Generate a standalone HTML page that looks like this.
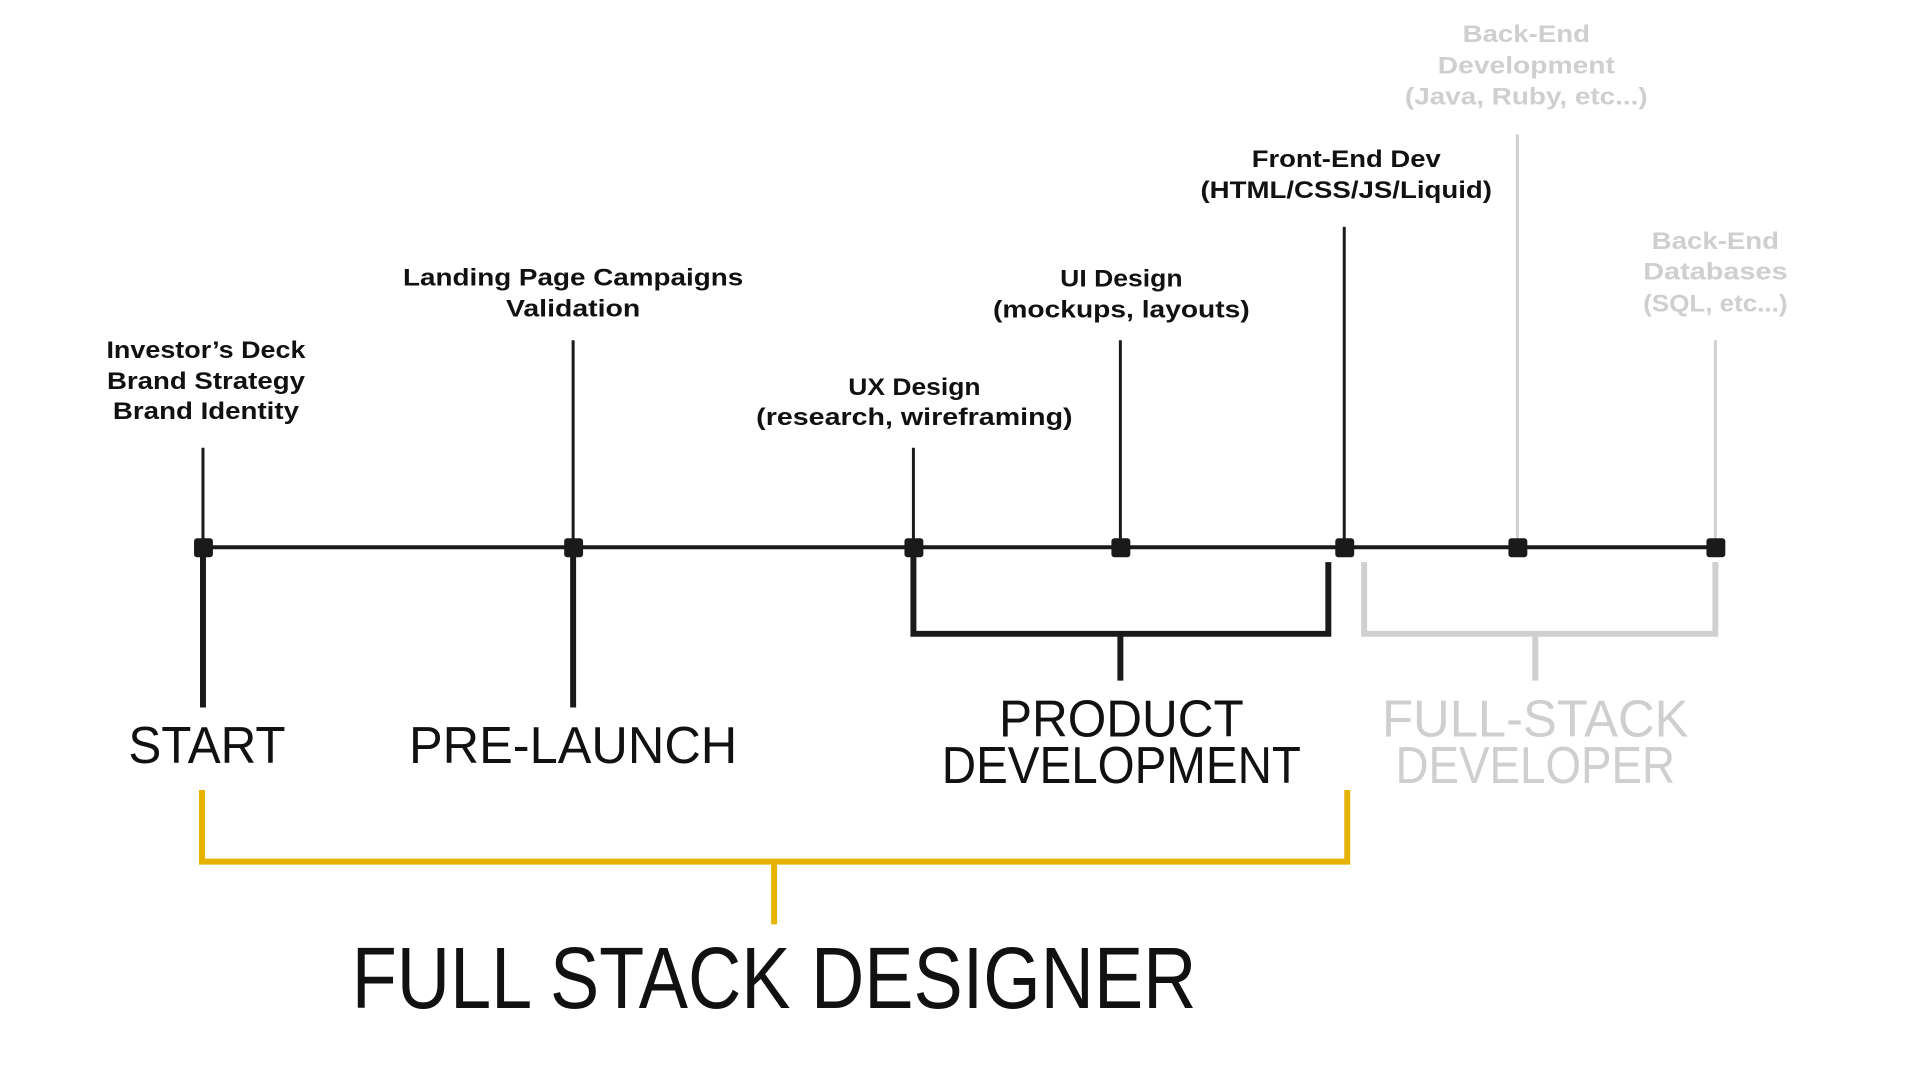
<!DOCTYPE html>
<html><head><meta charset="utf-8"><style>
html,body{margin:0;padding:0;background:#fff;width:1920px;height:1080px;overflow:hidden}
svg{display:block}
.s{font-family:"Liberation Sans",sans-serif;font-weight:bold;font-size:24px;text-anchor:middle}
.b{font-family:"Liberation Sans",sans-serif;font-size:52px;text-anchor:middle}
</style></head><body>
<svg width="1920" height="1080" viewBox="0 0 1920 1080">
<g transform="scale(0.995)">
<g stroke="#1a1a1a" stroke-width="3" fill="none">
<line x1="204" y1="450" x2="204" y2="550"/>
<line x1="576" y1="342" x2="576" y2="550"/>
<line x1="918" y1="450" x2="918" y2="550"/>
<line x1="1126" y1="342" x2="1126" y2="550"/>
<line x1="1351" y1="228" x2="1351" y2="550"/>
</g>
<g stroke="#d0d0d0" stroke-width="3" fill="none">
<line x1="1525" y1="135" x2="1525" y2="550"/>
<line x1="1724" y1="342" x2="1724" y2="550"/>
</g>
<line x1="204" y1="550" x2="1724" y2="550" stroke="#1a1a1a" stroke-width="4"/>
<g fill="#1a1a1a">
<rect x="195" y="541" width="19" height="19" rx="3"/>
<rect x="567" y="541" width="19" height="19" rx="3"/>
<rect x="909" y="541" width="19" height="19" rx="3"/>
<rect x="1117" y="541" width="19" height="19" rx="3"/>
<rect x="1342" y="541" width="19" height="19" rx="3"/>
<rect x="1516" y="541" width="19" height="19" rx="3"/>
<rect x="1715" y="541" width="19" height="19" rx="3"/>
</g>
<g stroke="#1a1a1a" stroke-width="6" fill="none">
<line x1="204" y1="550" x2="204" y2="711"/>
<line x1="576" y1="550" x2="576" y2="711"/>
<polyline points="918,555 918,637 1335,637 1335,565"/>
<line x1="1126" y1="637" x2="1126" y2="684"/>
</g>
<g stroke="#d0d0d0" stroke-width="6" fill="none">
<polyline points="1371,565 1371,637 1724,637 1724,565"/>
<line x1="1543" y1="637" x2="1543" y2="684"/>
</g>
<g stroke="#e6b400" stroke-width="6" fill="none">
<polyline points="203,794 203,866 1354,866 1354,794"/>
<line x1="778" y1="866" x2="778" y2="929"/>
</g>
<g class="s" fill="#111">
<text x="207" y="360" textLength="200" lengthAdjust="spacingAndGlyphs">Investor’s Deck</text>
<text x="207" y="391" textLength="199" lengthAdjust="spacingAndGlyphs">Brand Strategy</text>
<text x="207" y="421" textLength="187" lengthAdjust="spacingAndGlyphs">Brand Identity</text>
<text x="576" y="287" textLength="342" lengthAdjust="spacingAndGlyphs">Landing Page Campaigns</text>
<text x="576" y="318" textLength="135" lengthAdjust="spacingAndGlyphs">Validation</text>
<text x="919" y="397" textLength="133" lengthAdjust="spacingAndGlyphs">UX Design</text>
<text x="919" y="427" textLength="318" lengthAdjust="spacingAndGlyphs">(research, wireframing)</text>
<text x="1127" y="288" textLength="123" lengthAdjust="spacingAndGlyphs">UI Design</text>
<text x="1127" y="319" textLength="258" lengthAdjust="spacingAndGlyphs">(mockups, layouts)</text>
<text x="1353" y="168" textLength="190" lengthAdjust="spacingAndGlyphs">Front-End Dev</text>
<text x="1353" y="199" textLength="293" lengthAdjust="spacingAndGlyphs">(HTML/CSS/JS/Liquid)</text>
</g>
<g class="s" fill="#cfcfcf">
<text x="1534" y="42" textLength="128" lengthAdjust="spacingAndGlyphs">Back-End</text>
<text x="1534" y="74" textLength="178" lengthAdjust="spacingAndGlyphs">Development</text>
<text x="1534" y="105" textLength="244" lengthAdjust="spacingAndGlyphs">(Java, Ruby, etc...)</text>
<text x="1724" y="250" textLength="128" lengthAdjust="spacingAndGlyphs">Back-End</text>
<text x="1724" y="281" textLength="145" lengthAdjust="spacingAndGlyphs">Databases</text>
<text x="1724" y="313" textLength="145" lengthAdjust="spacingAndGlyphs">(SQL, etc...)</text>
</g>
<g class="b" fill="#111">
<text x="208" y="767" textLength="158" lengthAdjust="spacingAndGlyphs">START</text>
<text x="576" y="767" textLength="330" lengthAdjust="spacingAndGlyphs">PRE-LAUNCH</text>
<text x="1127" y="740" textLength="246" lengthAdjust="spacingAndGlyphs">PRODUCT</text>
<text x="1127" y="787" textLength="361" lengthAdjust="spacingAndGlyphs">DEVELOPMENT</text>
</g>
<g class="b" fill="#cfcfcf">
<text x="1543" y="740" textLength="308" lengthAdjust="spacingAndGlyphs">FULL-STACK</text>
<text x="1543" y="787" textLength="281" lengthAdjust="spacingAndGlyphs">DEVELOPER</text>
</g>
<text x="778" y="1013" fill="#111" font-family="Liberation Sans, sans-serif" font-size="88" text-anchor="middle" textLength="849" lengthAdjust="spacingAndGlyphs">FULL STACK DESIGNER</text>
</g>
</svg>
</body></html>
